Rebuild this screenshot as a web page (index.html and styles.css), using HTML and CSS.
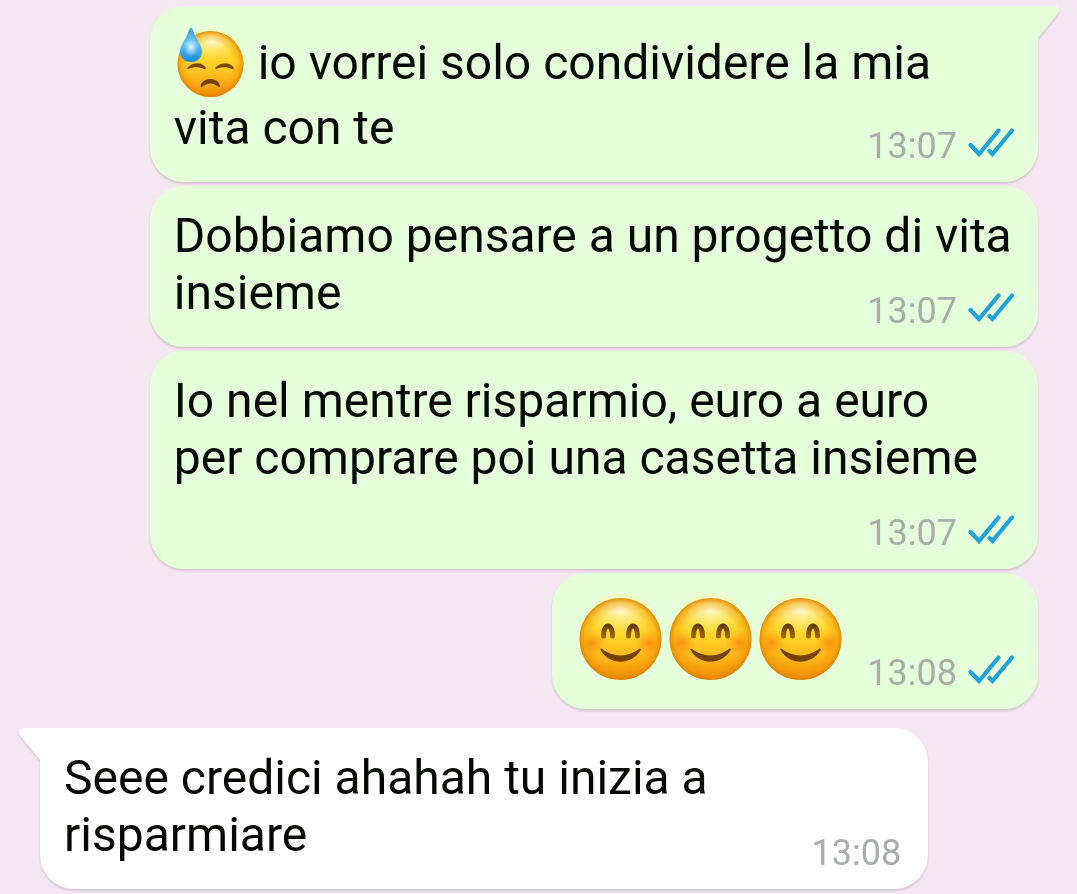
FILE: index.html
```html
<!DOCTYPE html>
<html lang="it">
<head>
<meta charset="utf-8">
<meta name="viewport" content="width=device-width, initial-scale=1">
<title>Chat</title>
<link rel="stylesheet" href="styles.css">
</head>
<body>
<svg class="defs" aria-hidden="true">
  <defs>
    <linearGradient id="skin" x1="0" y1="0" x2="0" y2="1">
      <stop offset="0" stop-color="#fbd835"/>
      <stop offset="0.45" stop-color="#ffd62a"/>
      <stop offset="0.75" stop-color="#fdb318"/>
      <stop offset="1" stop-color="#ec9009"/>
    </linearGradient>
    <radialGradient id="rim" cx="0.5" cy="0.5" r="0.5">
      <stop offset="0.66" stop-color="#f09000" stop-opacity="0"/>
      <stop offset="0.88" stop-color="#ee8c00" stop-opacity="0.4"/>
      <stop offset="1" stop-color="#dc7d00" stop-opacity="0.85"/>
    </radialGradient>
    <radialGradient id="shine" cx="0.5" cy="0.4" r="0.6">
      <stop offset="0" stop-color="#fffce0" stop-opacity="0.95"/>
      <stop offset="1" stop-color="#fff27a" stop-opacity="0"/>
    </radialGradient>
    <radialGradient id="blush">
      <stop offset="0" stop-color="#ff7a0a" stop-opacity="0.7"/>
      <stop offset="1" stop-color="#ff8a10" stop-opacity="0"/>
    </radialGradient>
    <linearGradient id="eye" x1="0" y1="0" x2="0" y2="1">
      <stop offset="0" stop-color="#6b3c00"/>
      <stop offset="1" stop-color="#9c6500"/>
    </linearGradient>
    <linearGradient id="drop" x1="0" y1="0" x2="0" y2="1">
      <stop offset="0" stop-color="#3f9fcb"/>
      <stop offset="0.45" stop-color="#62c4f2"/>
      <stop offset="1" stop-color="#1489dc"/>
    </linearGradient>
    <radialGradient id="dropShine">
      <stop offset="0" stop-color="#effbff"/>
      <stop offset="1" stop-color="#9fe0fb" stop-opacity="0"/>
    </radialGradient>
    <symbol id="checks" viewBox="0 0 46 30">
      <path d="M2.500 17 11 26 30.500 2.500M21.500 23 24.500 26 44 2.500" fill="none" stroke="#1fa3da" stroke-width="4.200" stroke-linecap="round" stroke-linejoin="miter"/>
    </symbol>
    <symbol id="smile" viewBox="0 0 90 90">
      <circle cx="44.500" cy="45" r="41" fill="url(#skin)"/>
      <ellipse cx="44.500" cy="20" rx="32" ry="21" fill="url(#shine)"/>
      <circle cx="16" cy="49" r="14" fill="url(#blush)"/>
      <circle cx="73" cy="49" r="14" fill="url(#blush)"/>
      <circle cx="44.500" cy="45" r="41" fill="url(#rim)"/>
      <path d="M27.500 42C27.500 28.500 36.500 28.500 36.500 42" fill="none" stroke="url(#eye)" stroke-width="5" stroke-linecap="round"/>
      <path d="M52.500 42C52.500 28.500 61.500 28.500 61.500 42" fill="none" stroke="url(#eye)" stroke-width="5" stroke-linecap="round"/>
      <path d="M24.500 56C24 54.500 25 54 26 55C37 63.500 52 63.500 63 55C64 54 65.500 55 64.500 56.500C55 71.500 33 71.500 24.500 56Z" fill="#744300"/>
    </symbol>
    <symbol id="sweat" viewBox="0 0 70 72">
      <circle cx="35.500" cy="37" r="33" fill="url(#skin)"/>
      <ellipse cx="37" cy="17" rx="25" ry="16" fill="url(#shine)"/>
      <circle cx="35.500" cy="37" r="33" fill="url(#rim)"/>
      <path d="M13 42C11.500 41.500 13 39.500 15 38.500C20 35 26 35.500 30 39.500C31.500 41.500 31 43 29 42C24 39.500 18 40 13 42Z" fill="#774900"/>
      <path d="M41 42C39.500 41.500 41 39.500 43 38.500C48 35 54 35.500 58 39.500C59.500 41.500 59 43 57 42C52 39.500 46 40 41 42Z" fill="#774900"/>
      <path d="M25.500 59C27 49.500 43.500 49.500 45 59C45 60.500 44 60.500 43 59.500C38 55.500 33 55.500 27.500 59.500C26.500 60.500 25.500 60.500 25.500 59Z" fill="#744300"/>
      <path d="M16 1C17.500 1 18 3 18.500 4.500C21 13 27 17 27 24.500C27 31 22 35 16 35S5 31 5 24.500C5 17 11 13 13.500 4.500C14 3 14.500 1 16 1Z" fill="url(#drop)"/>
      <ellipse cx="16" cy="20" rx="8" ry="10" fill="url(#dropShine)"/>
    </symbol>
    <symbol id="tail" viewBox="0 0 24 36">
      <path d="M0 0H18C22.500 0 24.500 4 21.500 8L2 32V36H0Z" fill="currentColor"/>
    </symbol>
  </defs>
</svg>

<main class="chat">
  <article class="bubble sent">
    <svg class="tail" aria-hidden="true"><use href="#tail"/></svg>
    <p class="text"><svg class="emoji" role="img" aria-label="Faccina abbattuta e sudata"><use href="#sweat"/></svg> io vorrei solo condividere la mia<br>vita con te</p>
    <div class="meta"><time datetime="13:07">13:07</time><svg class="checks" role="img" aria-label="Letto"><use href="#checks"/></svg></div>
  </article>

  <article class="bubble sent">
    <p class="text">Dobbiamo pensare a un progetto di vita<br>insieme</p>
    <div class="meta"><time datetime="13:07">13:07</time><svg class="checks" role="img" aria-label="Letto"><use href="#checks"/></svg></div>
  </article>

  <article class="bubble sent stacked">
    <p class="text">Io nel mentre risparmio, euro a euro<br>per comprare poi una casetta insieme</p>
    <div class="meta"><time datetime="13:07">13:07</time><svg class="checks" role="img" aria-label="Letto"><use href="#checks"/></svg></div>
  </article>

  <article class="bubble sent inline">
    <p class="emoji-row">
      <svg class="emoji-large" role="img" aria-label="Faccina sorridente"><use href="#smile"/></svg>
      <svg class="emoji-large" role="img" aria-label="Faccina sorridente"><use href="#smile"/></svg>
      <svg class="emoji-large" role="img" aria-label="Faccina sorridente"><use href="#smile"/></svg>
    </p>
    <div class="meta"><time datetime="13:08">13:08</time><svg class="checks" role="img" aria-label="Letto"><use href="#checks"/></svg></div>
  </article>

  <article class="bubble received">
    <svg class="tail" aria-hidden="true"><use href="#tail"/></svg>
    <p class="text">Seee credici ahahah tu inizia a<br>risparmiare</p>
    <div class="meta"><time datetime="13:08">13:08</time></div>
  </article>
</main>
</body>
</html>
```
FILE: styles.css
```css
* {
  box-sizing: border-box;
}

body {
  margin: 0;
  background: #f5e7f2;
  color: #050805;
  font-family: Roboto, "Noto Sans", sans-serif;
  font-size: 48px;
  line-height: 57px;
}

.defs {
  position: absolute;
  width: 0;
  height: 0;
}

.chat {
  display: flex;
  flex-direction: column;
  gap: 4px;
  padding: 6px 39px 5px 40px;
}

.bubble {
  position: relative;
  display: grid;
  width: 89%;
  padding: 21px 24px 15px;
  border-radius: 34px;
  filter: drop-shadow(0 2px 1px rgba(60, 50, 50, 0.18));
}

.sent {
  align-self: flex-end;
  background: #e5ffdb;
  color: #e5ffdb;
}

.received {
  align-self: flex-start;
  margin-top: 15px;
  background: #fff;
  color: #fff;
}

.sent:has(.tail) {
  border-top-right-radius: 0;
}

.received:has(.tail) {
  border-top-left-radius: 0;
}

.tail {
  position: absolute;
  top: 0;
  left: calc(100% - 2px);
  width: 24px;
  height: 36px;
}

.received .tail {
  right: calc(100% - 2px);
  left: auto;
  transform: scaleX(-1);
}

.text {
  grid-area: 1 / 1;
  margin: 0 0 11px;
  color: #050805;
}

.emoji {
  width: 72px;
  height: 72px;
  vertical-align: -20px;
}

.emoji-row {
  display: flex;
  margin: 0 0 10px;
}

.emoji-large {
  width: 90px;
  height: 90px;
}

.meta {
  grid-area: 1 / 1;
  align-self: end;
  justify-self: end;
  display: flex;
  align-items: center;
  gap: 11px;
  color: #a7aeaa;
  font-size: 36px;
  line-height: 42px;
}

.stacked {
  row-gap: 15px;
}

.stacked .meta {
  grid-area: 2 / 1;
}

.inline {
  display: flex;
  width: auto;
  gap: 21px;
}

.inline .meta {
  align-self: flex-end;
}

.checks {
  width: 46px;
  height: 30px;
  margin-bottom: 6px;
}

.received .meta {
  padding-right: 3px;
  color: #a9abad;
}
```
